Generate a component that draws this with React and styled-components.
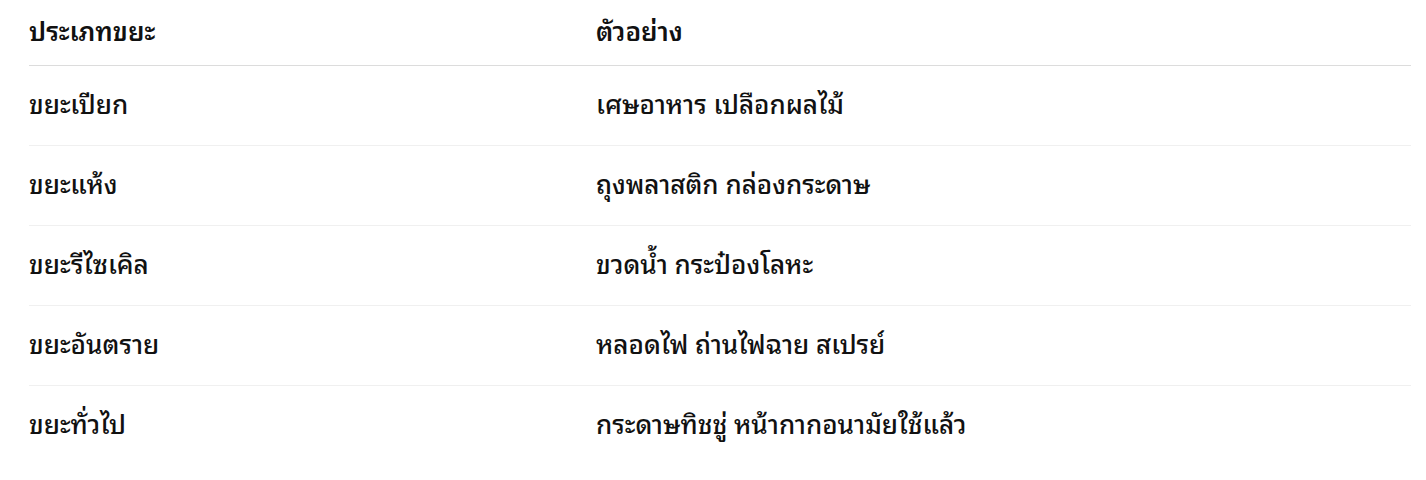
import React from 'react';
import styled, { createGlobalStyle } from 'styled-components';

const GlobalStyle = createGlobalStyle`
  body {
    margin: 0;
    background: #ffffff;
    font-family: "Noto Sans Thai Looped", "Noto Sans", sans-serif;
    color: #111111;
  }
`

const Wrapper = styled.section`
  padding: 1px 15px 0 29px;
`

const Table = styled.div`
  display: flex;
  flex-direction: column;
  width: 100%;
`

const Row = styled.div`
  display: grid;
  grid-template-columns: 567px 1fr;
  align-items: center;
  height: ${props => props.header ? '64px' : '79px'};
  border-bottom: 1px solid ${props => props.header ? '#dcdcdc' : '#f0f0f0'};

  &:last-child {
    border-bottom: none;
  }
`

const Cell = styled.div`
  font-size: 26px;
  font-weight: ${props => props.header ? 600 : 500};
  line-height: 1.2;
  padding-bottom: 6px;
  color: #111111;
`

const rows = [
  ['ขยะเปียก', 'เศษอาหาร เปลือกผลไม้'],
  ['ขยะแห้ง', 'ถุงพลาสติก กล่องกระดาษ'],
  ['ขยะรีไซเคิล', 'ขวดน้ำ กระป๋องโลหะ'],
  ['ขยะอันตราย', 'หลอดไฟ ถ่านไฟฉาย สเปรย์'],
  ['ขยะทั่วไป', 'กระดาษทิชชู่ หน้ากากอนามัยใช้แล้ว'],
];

export default function App() {
  return (
    <>
      <GlobalStyle />
      <Wrapper>
        <Table>
          <Row header>
            <Cell header>ประเภทขยะ</Cell>
            <Cell header>ตัวอย่าง</Cell>
          </Row>
          {rows.map(([type, example]) => (
            <Row key={type}>
              <Cell>{type}</Cell>
              <Cell>{example}</Cell>
            </Row>
          ))}
        </Table>
      </Wrapper>
    </>
  );
}
